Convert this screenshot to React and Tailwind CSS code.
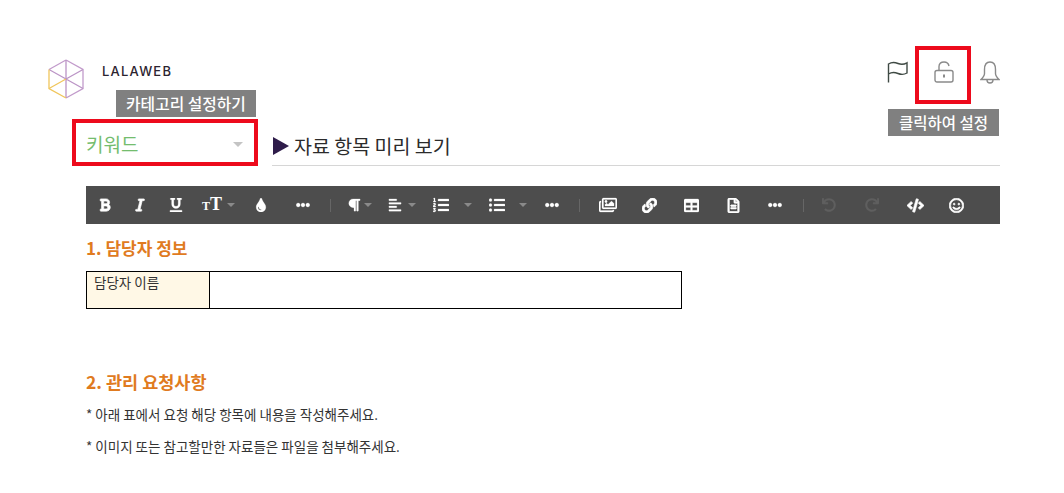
import {
  FaBold,
  FaItalic,
  FaUnderline,
  FaTint,
  FaEllipsisH,
  FaParagraph,
  FaAlignLeft,
  FaListOl,
  FaListUl,
  FaRegImages,
  FaLink,
  FaTable,
  FaRegFileAlt,
  FaUndo,
  FaRedo,
  FaCode,
  FaRegSmile,
} from 'react-icons/fa'

const KO = "font-['Noto_Sans_CJK_KR','Noto_Sans',sans-serif]"

function Caret({ className = '' }) {
  return (
    <span
      className={`h-0 w-0 border-x-[4px] border-t-[4px] border-x-transparent border-t-[#8a8a8a] ${className}`}
    />
  )
}

function Tool({ icon: Icon, size = 14, width, dim = false, bold = false, className = '' }) {
  return (
    <span className={`flex shrink-0 items-center justify-center ${width} ${className}`}>
      <Icon
        size={size}
        color={dim ? '#5f5f5f' : '#ffffff'}
        stroke={dim ? '#5f5f5f' : '#ffffff'}
        strokeWidth={bold ? 24 : 8}
      />
    </span>
  )
}

function Sep({ width }) {
  return (
    <span className={`flex shrink-0 justify-center ${width}`}>
      <span className="h-[13px] w-px shrink-0 bg-[#666666]" />
    </span>
  )
}

function Toolbar() {
  return (
    <div className="ml-[86px] flex h-[38px] w-[914px] items-center bg-[#4d4d4d] pl-[1px]">
      <Tool icon={FaBold} size={14} width="w-[35px]" bold />
      <Tool icon={FaItalic} size={14} width="w-[36px]" bold />
      <Tool icon={FaUnderline} size={14} width="w-[36px]" />
      <span className="flex w-[36px] shrink-0 items-baseline justify-center pb-[2px] font-['Liberation_Serif',serif] font-bold leading-none text-white">
        <span className="text-[12px]">T</span>
        <span className="text-[18px]">T</span>
      </span>
      <Caret className="ml-[-3px]" />
      <Tool icon={FaTint} size={14} width="w-[52px]" />
      <Tool icon={FaEllipsisH} size={14} width="w-[32px]" />
      <Sep width="w-[22px]" />
      <Tool icon={FaParagraph} size={14} width="w-[26px]" />
      <Caret className="ml-[-3px]" />
      <Tool icon={FaAlignLeft} size={14} width="w-[34px]" className="ml-[6px]" />
      <Caret className="ml-[-4px]" />
      <Tool icon={FaListOl} size={16} width="w-[50px]" />
      <Caret className="ml-[-2px]" />
      <Tool icon={FaListUl} size={16} width="w-[50px]" />
      <Caret className="ml-[-3px]" />
      <Tool icon={FaEllipsisH} size={14} width="w-[50px]" />
      <Sep width="w-[4px]" />
      <Tool icon={FaRegImages} size={18} width="w-[54px]" />
      <Tool icon={FaLink} size={15} width="w-[28px]" bold />
      <Tool icon={FaTable} size={15} width="w-[56px]" />
      <Tool icon={FaRegFileAlt} size={15} width="w-[28px]" bold />
      <Tool icon={FaEllipsisH} size={14} width="w-[56px]" />
      <Sep width="w-[0px]" />
      <Tool icon={FaUndo} size={14} width="w-[52px]" dim />
      <Tool icon={FaRedo} size={14} width="w-[34px]" dim />
      <Tool icon={FaCode} size={17} width="w-[52px]" bold />
      <Tool icon={FaRegSmile} size={15} width="w-[30px]" bold />
    </div>
  )
}

function Logo() {
  return (
    <svg width="38" height="40" viewBox="0 0 38 40" fill="none" strokeWidth="1.300">
      <path d="M19 1 L36 10.500 L36 29.500 L19 39" stroke="#c29bcb" />
      <path d="M19 1 L2 10.500" stroke="#c29bcb" />
      <path d="M19 1 L19 39 M2 10.500 L19 20 L36 29.500 M19 20 L36 10.500" stroke="#bb94c6" />
      <path d="M2 10.500 L2 29.500 L19 39" stroke="#f0c65c" />
      <path d="M2 29.500 L19 20" stroke="#f0c65c" />
    </svg>
  )
}

function Flag() {
  return (
    <svg width="22" height="22" viewBox="0 0 22 22" fill="none" stroke="#3f4a44" strokeWidth="1.400">
      <path d="M2.500 21.500 V3 C6.500 0.500 9.500 1.500 12 2.500 C14.500 3.500 17.500 3.800 21 1.800 V12 C17.500 14 14.500 13.500 12 12.500 C9.500 11.500 6.500 10.500 2.500 13" />
    </svg>
  )
}

function Lock() {
  return (
    <svg width="20" height="22" viewBox="0 0 20 22" fill="none" stroke="#8a8a8a" strokeWidth="1.400">
      <rect x="1" y="9.500" width="18" height="11.500" rx="2" />
      <path d="M5 9.500 V5.500 C5 2.500 7 1 10 1 C12.500 1 14.500 2.500 15 5" />
      <path d="M10 13.500 V16.500" strokeWidth="2" />
    </svg>
  )
}

function Bell() {
  return (
    <svg width="20" height="24" viewBox="0 0 20 24" fill="none" stroke="#8a8a8a" strokeWidth="1.400">
      <path d="M10 1 C5.500 1 4.500 5 4.500 8.500 V12.500 C4.500 15 3 16.500 1 18.500 H19 C17 16.500 15.500 15 15.500 12.500 V8.500 C15.500 5 14.500 1 10 1 Z" />
      <path d="M7 19 C7 23 13 23 13 19" />
    </svg>
  )
}

function Header() {
  return (
    <div className="relative h-[186px]">
      <div className="flex pl-[47px] pt-[59px]">
        <Logo />
        <span className="ml-[17px] mt-[5px] font-['Inter',sans-serif] text-[13px] font-medium leading-[14px] tracking-[1.200px] text-[#2c2430]">
          LALAWEB
        </span>
        <div className="ml-auto mr-[64px] mt-[2px] flex items-start">
          <Flag />
          <span className="ml-[26px]">
            <Lock />
          </span>
          <span className="ml-[26px]">
            <Bell />
          </span>
        </div>
      </div>

      <div className={`absolute left-[72px] top-[119px] flex h-[47px] w-[186px] items-center justify-between border-[4px] border-[#ed0a1c] pl-[10px] pr-[11px] pt-[4px] ${KO}`}>
        <span className="text-[19px] text-[#74bd6e]">키워드</span>
        <Caret className="border-x-[5px] border-t-[5px] border-t-[#c4c4c4]" />
      </div>

      <div className={`absolute left-[272px] top-[126px] flex h-[40px] w-[728px] items-center border-b border-[#d6d6d6] text-[19.500px] text-[#2b2b2b] ${KO}`}>
        <span className="ml-[1px] mr-[5px] h-0 w-0 border-y-[9px] border-l-[16px] border-y-transparent border-l-[#2e1c4a]" />
        자료 항목 미리 보기
      </div>

      <span className={`absolute left-[116px] top-[90px] flex h-[27px] w-[140px] items-center justify-center bg-[#808080] text-[15.800px] font-medium text-white ${KO}`}>
        카테고리 설정하기
      </span>
      <span className={`absolute left-[888px] top-[109px] flex h-[27px] w-[111px] items-center justify-center bg-[#808080] text-[15.500px] font-medium text-white ${KO}`}>
        클릭하여 설정
      </span>
      <span className="absolute left-[915px] top-[46px] h-[58px] w-[56px] border-[4px] border-[#ed0a1c]" />
    </div>
  )
}

function Body() {
  return (
    <div className={`pl-[86px] ${KO}`}>
      <h2 className="mt-[12px] text-[17px] font-bold leading-[24px] text-[#e07b1f]">1. 담당자 정보</h2>
      <div className="mt-[11px] flex h-[38px] w-[596px] border border-black">
        <div className="w-[123px] border-r border-black bg-[#fff8e6] pl-[7px] text-[13.500px] leading-[20px] text-[#333333]">
          담당자 이름
        </div>
      </div>
      <h2 className="mt-[61px] text-[17.500px] font-bold leading-[24px] text-[#e07b1f]">2. 관리 요청사항</h2>
      <p className="mt-[11px] text-[13.500px] leading-[18px] text-[#333333]">* 아래 표에서 요청 해당 항목에 내용을 작성해주세요.</p>
      <p className="mt-[14px] text-[13.500px] leading-[18px] text-[#333333]">* 이미지 또는 참고할만한 자료들은 파일을 첨부해주세요.</p>
    </div>
  )
}

export default function App() {
  return (
    <div className="h-[493px] w-[1064px] overflow-hidden bg-white">
      <Header />
      <Toolbar />
      <Body />
    </div>
  )
}
